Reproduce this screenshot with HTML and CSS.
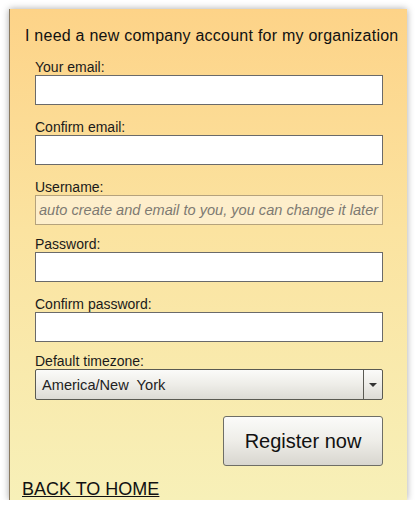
FILE: index.html
```html
<!DOCTYPE html>
<html>
<head>
<meta charset="utf-8">
<link rel="stylesheet" href="styles.css">
</head>
<body>
<div class="panel">
  <h1 class="title">I need a new company account for my organization</h1>
  <form class="form">
    <div class="field">
      <label class="label">Your email:</label>
      <input class="input" type="text">
    </div>
    <div class="field">
      <label class="label">Confirm email:</label>
      <input class="input" type="text">
    </div>
    <div class="field field-short">
      <label class="label">Username:</label>
      <input class="input input-disabled" type="text" placeholder="auto create and email to you, you can change it later">
    </div>
    <div class="field">
      <label class="label">Password:</label>
      <input class="input" type="password">
    </div>
    <div class="field field-short">
      <label class="label">Confirm password:</label>
      <input class="input" type="password">
    </div>
    <div class="field field-last">
      <label class="label">Default timezone:</label>
      <div class="select">
        <span class="select-text">America/New&nbsp; York</span>
        <span class="select-arrow"><svg width="8" height="4" viewBox="0 0 8 4"><path d="M0 0H8L4 4Z" fill="#333"/></svg></span>
      </div>
    </div>
    <div class="actions">
      <button class="btn" type="button">Register now</button>
    </div>
  </form>
  <a class="back" href="#">BACK TO HOME</a>
</div>
</body>
</html>
```
FILE: styles.css
```css
html, body {
  margin: 0;
  padding: 0;
  background: #ffffff;
}
body {
  font-family: "Liberation Sans", Arial, sans-serif;
  color: #111;
}
.panel {
  box-sizing: border-box;
  margin: 9px 0 0 9px;
  width: 398px;
  height: 491px;
  border-left: 1px solid #8a7a60;
  background: linear-gradient(to bottom, #fdd388 0%, #fbe3a0 45%, #f7f0b8 100%);
  box-shadow: 0 0 7px rgba(0, 0, 0, 0.35);
  padding: 17px 0 0 15px;
}
.title {
  margin: 0;
  font-weight: normal;
  font-size: 16px;
  line-height: 20px;
  letter-spacing: 0.24px;
  white-space: nowrap;
  color: #111;
}
.form {
  padding-left: 10px;
  margin-top: 13px;
  width: 348px;
}
.field {
  display: flex;
  flex-direction: column;
  margin-bottom: 14px;
}
.field-short {
  margin-bottom: 11px;
}
.field-last {
  margin-bottom: 16px;
}
.label {
  font-size: 14px;
  line-height: 16px;
  color: #1a1a1a;
}
.input {
  box-sizing: border-box;
  width: 348px;
  height: 30px;
  margin: 0;
  border: 1px solid #6a6a6a;
  background: #ffffff;
  font-family: "Liberation Sans", Arial, sans-serif;
  font-size: 14.6px;
  padding: 0 3px;
  outline: none;
}
.input-disabled {
  background: #fdeecb;
  border-color: #b5a27c;
}
.input-disabled::placeholder {
  color: #7d7a72;
  font-style: italic;
  font-size: 14.6px;
}
.select {
  box-sizing: border-box;
  width: 348px;
  height: 31px;
  display: flex;
  border: 1px solid #5a5a52;
  border-radius: 2px;
  background: linear-gradient(to bottom, #fbfbf9 0%, #eeede8 50%, #dcdbd5 100%);
}
.select-text {
  flex: 1;
  display: flex;
  align-items: center;
  padding-left: 6px;
  font-size: 14.6px;
  color: #222;
}
.select-arrow {
  width: 18px;
  border-left: 1px solid #5a5a52;
  display: flex;
  align-items: center;
  justify-content: center;
}
.actions {
  display: flex;
  justify-content: flex-end;
}
.btn {
  box-sizing: border-box;
  width: 160px;
  height: 50px;
  border: 1px solid #6e6e66;
  border-radius: 3px;
  background: linear-gradient(to bottom, #fbfbf9 0%, #eeede8 50%, #d8d6cf 100%);
  font-family: "Liberation Sans", Arial, sans-serif;
  font-size: 20px;
  color: #111;
  padding: 0;
}
.back {
  display: inline-block;
  margin: 13px 0 0 -3px;
  font-size: 18px;
  line-height: 20px;
  color: #111;
  text-decoration: underline;
}
```
